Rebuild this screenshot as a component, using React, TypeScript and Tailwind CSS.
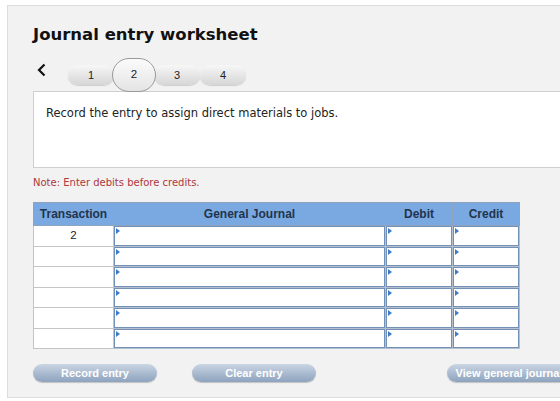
import React from "react";

const Tri = () => (
  <div className="absolute left-[1px] top-[1px] w-0 h-0 border-y-[3px] border-y-transparent border-l-[4px] border-l-[#3d7cc9]" />
);

const Tab = ({ n, active }: { n: number; active?: boolean }) =>
  active ? (
    <div className="relative z-10 -mx-[2px] flex h-[34px] w-[44px] items-center justify-center rounded-full border border-[#9a9a9a] bg-gradient-to-b from-[#fbfbfb] to-[#e4e4e4] text-[11.5px] text-[#222] [font-family:'Liberation_Sans',sans-serif]">
      {n}
    </div>
  ) : (
    <div className="flex h-[20px] w-[46px] items-center justify-center rounded-full bg-gradient-to-b from-[#f7f7f7] to-[#d6d6d6] shadow-[0_1px_1px_rgba(0,0,0,0.15)] text-[11px] text-[#222] [font-family:'Liberation_Sans',sans-serif]">
      {n}
    </div>
  );

const Btn = ({ label, w }: { label: string; w: string }) => (
  <div
    className={`${w} flex h-[18px] items-center justify-center rounded-full bg-gradient-to-b from-[#c9d5e3] to-[#8ea3be] text-[11px] font-bold text-white shadow-[0_1px_1px_rgba(0,0,0,0.2)] [font-family:'Liberation_Sans',sans-serif]`}
  >
    {label}
  </div>
);

export default function App() {
  const rows = ["2", "", "", "", "", ""];
  return (
    <div className="h-[401px] w-[560px] overflow-hidden bg-white">
      <div className="ml-[7px] mt-[5px] h-[393px] w-[600px] border border-[#dcdcdc] bg-[#f2f2f2] pl-[25px]">
        <div className="pt-[18px] text-[16.5px] leading-[22px] font-bold text-[#111] [font-family:'DejaVu_Sans',sans-serif]">
          Journal entry worksheet
        </div>
        <div className="mt-[9px] flex h-[36px] items-center">
          <svg width="10" height="14" viewBox="0 0 10 14" className="ml-[4px] -mt-[6px]">
            <path d="M7.5 1.5 L2 7 L7.5 12.5" fill="none" stroke="#111" strokeWidth="2.2" />
          </svg>
          <div className="ml-[21px] mt-[4px] flex items-center">
            <Tab n={1} />
            <Tab n={2} active />
            <Tab n={3} />
            <Tab n={4} />
          </div>
        </div>
        <div className="h-[77px] w-[560px] border border-[#cfcfcf] bg-white pl-[12px] pt-[13px] text-[11.5px] text-[#222] [font-family:'DejaVu_Sans',sans-serif]">
          Record the entry to assign direct materials to jobs.
        </div>
        <div className="mt-[7px] text-[10px] text-[#b0373a] [font-family:'DejaVu_Sans',sans-serif]">
          Note: Enter debits before credits.
        </div>
        <table className="mt-[12px] border-collapse [font-family:'Liberation_Sans',sans-serif]">
          <thead>
            <tr className="h-[23px] bg-[#7aa9e2] text-[12px] font-bold text-[#22344d]">
              <th className="w-[80px] border border-[#8fa3bd] p-0">Transaction</th>
              <th className="w-[272px] border border-[#8fa3bd] p-0">General Journal</th>
              <th className="w-[67px] border border-[#8fa3bd] p-0">Debit</th>
              <th className="w-[67px] border border-[#8fa3bd] p-0">Credit</th>
            </tr>
          </thead>
          <tbody>
            {rows.map((r, i) => (
              <tr key={i}>
                <td className="border border-[#c4c4c4] bg-white p-0 text-center text-[11.5px] text-[#222]">
                  {r}
                </td>
                {[0, 1, 2].map((c) => (
                  <td key={c} className="border border-[#b5c0cf] p-0">
                    <div className="relative h-[19.5px] border-[1.5px] border-[#7390b6] bg-white">
                      <Tri />
                    </div>
                  </td>
                ))}
              </tr>
            ))}
          </tbody>
        </table>
        <div className="mt-[15px] flex">
          <Btn label="Record entry" w="w-[124px]" />
          <div className="ml-[35px]">
            <Btn label="Clear entry" w="w-[124px]" />
          </div>
          <div className="ml-[131px]">
            <Btn label="View general journal" w="w-[124px]" />
          </div>
        </div>
      </div>
    </div>
  );
}
